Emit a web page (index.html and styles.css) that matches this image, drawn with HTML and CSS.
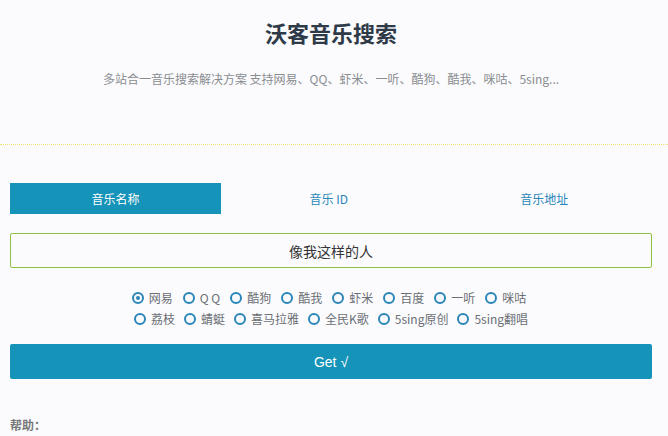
FILE: index.html
```html
<!DOCTYPE html>
<html lang="zh">
<head>
<meta charset="utf-8">
<title>沃客音乐搜索</title>
<link rel="stylesheet" href="styles.css">
</head>
<body>
<div class="page">
  <header class="header">
    <h1 class="title">沃客音乐搜索</h1>
    <p class="subtitle">多站合一音乐搜索解决方案 支持网易、QQ、虾米、一听、酷狗、酷我、咪咕、5sing...</p>
  </header>
  <main class="main">
    <div class="tabs">
      <div class="tab active">音乐名称</div>
      <div class="tab">音乐 ID</div>
      <div class="tab">音乐地址</div>
    </div>
    <div class="input">像我这样的人</div>
    <div class="radios">
      <div class="radio-row">
        <span class="radio checked"><i></i>网易</span>
        <span class="radio"><i></i>Q Q</span>
        <span class="radio"><i></i>酷狗</span>
        <span class="radio"><i></i>酷我</span>
        <span class="radio"><i></i>虾米</span>
        <span class="radio"><i></i>百度</span>
        <span class="radio"><i></i>一听</span>
        <span class="radio"><i></i>咪咕</span>
      </div>
      <div class="radio-row radio-row-tight">
        <span class="radio"><i></i>荔枝</span>
        <span class="radio"><i></i>蜻蜓</span>
        <span class="radio"><i></i>喜马拉雅</span>
        <span class="radio"><i></i>全民K歌</span>
        <span class="radio"><i></i>5sing原创</span>
        <span class="radio"><i></i>5sing翻唱</span>
      </div>
    </div>
    <div class="btn">Get √</div>
    <div class="help">帮助：</div>
  </main>
</div>
</body>
</html>
```

FILE: styles.css
```css
html, body {
  margin: 0;
  padding: 0;
  background: #fbfbfe;
  font-family: "Noto Sans CJK SC", "Open Sans", sans-serif;
  color: #555;
  overflow: hidden;
}
.page {
  width: 668px;
  height: 436px;
  box-sizing: border-box;
}
.header {
  height: 145px;
  box-sizing: border-box;
  border-bottom: 1px dotted #ebe474;
  text-align: center;
  padding-top: 16px;
  padding-right: 16px;
  padding-left: 10px;
}
.title {
  margin: 0;
  font-size: 22px;
  line-height: 32px;
  font-weight: bold;
  color: #2e3a47;
}
.subtitle {
  margin: 22px 0 0;
  font-size: 12px;
  line-height: 18px;
  color: #8a8d90;
}
.main {
  padding: 38px 16px 0 10px;
}
.tabs {
  display: grid;
  grid-template-columns: 211px 1fr 1fr;
  height: 31px;
}
.tab {
  display: flex;
  align-items: center;
  justify-content: center;
  font-size: 12px;
  color: #2a86b8;
}
.tab.active {
  background: #1593b8;
  color: #fff;
}
.input {
  margin-top: 19px;
  height: 35px;
  box-sizing: border-box;
  border: 1px solid #8fbf45;
  border-radius: 2px;
  display: flex;
  align-items: center;
  justify-content: center;
  font-size: 14px;
  color: #333;
}
.radios {
  margin-top: 21px;
  display: flex;
  flex-direction: column;
  align-items: center;
  gap: 3px;
}
.radio-row {
  display: flex;
  gap: 10px;
  padding-right: 4px;
}
.radio-row-tight {
  gap: 9px;
  padding-right: 0;
}
.radio {
  display: flex;
  align-items: center;
  font-size: 12px;
  line-height: 18px;
  color: #6b6f74;
}
.radio i {
  width: 8px;
  height: 8px;
  border: 2px solid #2a86b8;
  border-radius: 50%;
  margin-right: 5px;
  position: relative;
  box-sizing: content-box;
}
.radio.checked i::after {
  content: "";
  position: absolute;
  left: 2px;
  top: 2px;
  width: 4px;
  height: 4px;
  border-radius: 50%;
  background: #2a86b8;
}
.btn {
  margin-top: 16px;
  height: 35px;
  background: #1593b8;
  border-radius: 2px;
  display: flex;
  align-items: center;
  justify-content: center;
  color: #fff;
  font-size: 14px;
  font-family: "Liberation Sans", "Noto Sans CJK SC", sans-serif;
}
.help {
  margin-top: 37px;
  font-size: 12px;
  font-weight: bold;
  color: #777;
}
```
